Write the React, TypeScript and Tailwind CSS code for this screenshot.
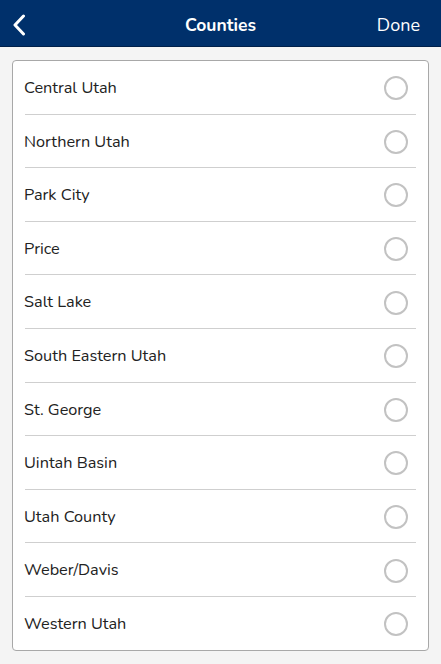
import { useState } from 'react';

const counties = [
    'Central Utah',
    'Northern Utah',
    'Park City',
    'Price',
    'Salt Lake',
    'South Eastern Utah',
    'St. George',
    'Uintah Basin',
    'Utah County',
    'Weber/Davis',
    'Western Utah',
];

export default function App() {
    const [selected, setSelected] = useState<string | null>(null);

    return (
        <div className="min-h-screen bg-[#f4f4f4] font-['Nunito','Lato','Liberation_Sans',sans-serif]">
            {/* Header */}
            <div className="h-[47px] bg-[#00306b] border-b border-[#00204a] flex items-center justify-between px-3 pt-[4px] relative">
                <button className="text-white w-6 h-6 flex items-center">
                    <svg width="14" height="22" viewBox="0 0 14 22" fill="none">
                        <path d="M11.5 2 L3 11 L11.5 20" stroke="white" strokeWidth="3" strokeLinecap="round" strokeLinejoin="round" />
                    </svg>
                </button>
                <h1 className="absolute left-1/2 -translate-x-1/2 text-white font-bold text-[17.5px]">Counties</h1>
                <button className="text-white text-[18px] pr-[9px]">Done</button>
            </div>

            {/* List */}
            <div className="mx-3 mt-[13px] bg-white border border-[#a8a8a8] rounded-[4px]">
                {counties.map((name, i) => (
                    <div key={name}>
                        {i > 0 && <div className="mx-3 h-px bg-[#cfcfcf]" />}
                        <button
                            onClick={() => setSelected(name)}
                            className="w-full h-[52.6px] flex items-center justify-between pl-[11px] pr-[20px] pt-[2px] text-left"
                        >
                            <span className="text-[16.3px] text-[#222]">{name}</span>
                            <span className="w-[24px] h-[24px] rounded-full border-2 border-[#c2c2c2] flex items-center justify-center">
                                {selected === name && <span className="w-3 h-3 rounded-full bg-[#00306b]" />}
                            </span>
                        </button>
                    </div>
                ))}
            </div>
        </div>
    );
}
